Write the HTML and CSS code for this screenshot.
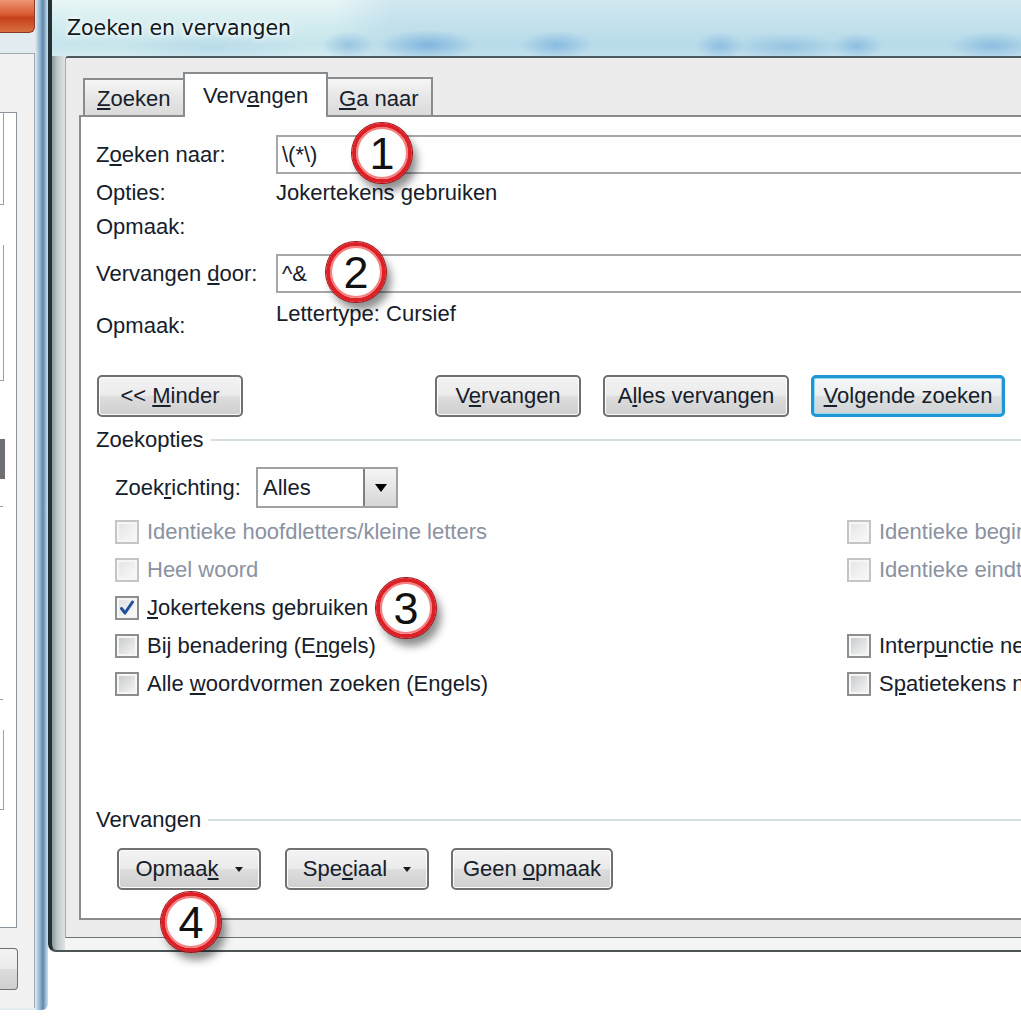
FILE: index.html
```html
<!DOCTYPE html>
<html lang="nl">

<head>
    <meta charset="UTF-8">
    <title>Zoeken en vervangen</title>
    <link rel="stylesheet" href="styles.css">
</head>

<body>
    <div class="desktop">
        <!-- venster op de achtergrond -->
        <div class="back-window">
            <div class="back-close"></div>
            <div class="back-client">
                <div class="back-panel">
                    <div class="back-box back-box-top"></div>
                    <div class="back-box back-box-list"></div>
                    <div class="back-knob"></div>
                    <div class="back-tick"></div>
                    <div class="back-tick"></div>
                    <div class="back-box back-box-low"></div>
                </div>
                <div class="back-button"></div>
            </div>
        </div>

        <!-- dialoogvenster -->
        <div class="dialog">
            <div class="titlebar">Zoeken en vervangen</div>
            <div class="client">
                <div class="tabs">
                    <div class="tab tab-find"><u>Z</u>oeken</div>
                    <div class="tab tab-replace">Verv<u>a</u>ngen</div>
                    <div class="tab tab-goto"><u>G</u>a naar</div>
                </div>
                <div class="panel">
                    <div class="row field">
                        <span class="label">Z<u>o</u>eken naar:</span>
                        <div class="input">\(*\)</div>
                    </div>
                    <div class="row info">
                        <span class="label">Opties:</span>
                        <span>Jokertekens gebruiken</span>
                    </div>
                    <div class="row info short">
                        <span class="label">Opmaak:</span>
                    </div>
                    <div class="row field field-second">
                        <span class="label">Vervangen <u>d</u>oor:</span>
                        <div class="input">^&amp;</div>
                    </div>
                    <div class="row fmt">
                        <span class="label">Opmaak:</span>
                        <span class="value">Lettertype: Cursief</span>
                    </div>

                    <div class="actions">
                        <button class="btn btn-less"><span>&lt;&lt; <u>M</u>inder</span></button>
                        <button class="btn btn-replace"><span>V<u>e</u>rvangen</span></button>
                        <button class="btn btn-all"><span>A<u>l</u>les vervangen</span></button>
                        <button class="btn btn-default"><span><u>V</u>olgende zoeken</span></button>
                    </div>

                    <div class="group group-search">Zoekopties</div>

                    <div class="direction">
                        <span class="dir-label">Zoek<u>r</u>ichting:</span>
                        <div class="select">
                            <span class="select-value">Alles</span>
                            <span class="select-arrow"></span>
                        </div>
                    </div>

                    <div class="options">
                        <div class="opt off"><span class="box"></span><span>Identieke hoofdletters/kleine letters</span></div>
                        <div class="opt off"><span class="box"></span><span>Identieke beginletters</span></div>
                        <div class="opt off"><span class="box"></span><span>Heel woord</span></div>
                        <div class="opt off"><span class="box"></span><span>Identieke eindtekens</span></div>
                        <div class="opt"><span class="box checked"><svg viewBox="0 0 20 20" width="20" height="20"><path d="M4.5 10.5 L8 15 L15.5 4" fill="none" stroke="#21509a" stroke-width="3" stroke-linecap="round" stroke-linejoin="round"/></svg></span><span><u>J</u>okertekens gebruiken</span></div>
                        <div></div>
                        <div class="opt"><span class="box"></span><span>Bij benadering (E<u>n</u>gels)</span></div>
                        <div class="opt"><span class="box"></span><span>Interp<u>u</u>nctie negeren</span></div>
                        <div class="opt"><span class="box"></span><span>Alle <u>w</u>oordvormen zoeken (Engels)</span></div>
                        <div class="opt"><span class="box"></span><span>S<u>p</u>atietekens negeren</span></div>
                    </div>

                    <div class="group group-replace">Vervangen</div>

                    <div class="format-buttons">
                        <button class="btn btn-menu btn-format"><span>Opmaa<u>k</u></span><span class="caret"></span></button>
                        <button class="btn btn-menu btn-special"><span>Spe<u>c</u>iaal</span><span class="caret"></span></button>
                        <button class="btn btn-none"><span>Geen <u>o</u>pmaak</span></button>
                    </div>
                </div>
            </div>
        </div>

        <!-- genummerde markeringen -->
        <div class="badge badge-1">1</div>
        <div class="badge badge-2">2</div>
        <div class="badge badge-3">3</div>
        <div class="badge badge-4">4</div>
    </div>
</body>

</html>
```

FILE: styles.css
```css
* {
    margin: 0;
    padding: 0;
    box-sizing: border-box;
}

body {
    background: #fff;
    font-family: 'Liberation Sans', Arial, sans-serif;
    font-size: 22px;
    color: #16202b;
}

u {
    text-underline-offset: 2px;
}

.desktop {
    position: relative;
    width: 1021px;
    height: 1020px;
    overflow: hidden;
    background: #fff;
}

/* achtergrondvenster */
.back-window {
    position: absolute;
    left: 0;
    top: 0;
    width: 48px;
    height: 1010px;
    background: linear-gradient(90deg, #e2ebf0 0, #e2ebf0 35px, #c0d6e6 37px, #7fa5c5 41px, #5f87aa 43px, #a3c2d9 46px, #cfdfea 48px);
    border-bottom-right-radius: 6px;
}

.back-close {
    width: 35px;
    height: 33px;
    background: linear-gradient(#ec9474, #d95b31 45%, #c63f1b 55%, #d8703f);
    border-right: 1px solid #8a3a24;
    border-bottom: 1px solid #8a3a24;
    border-bottom-right-radius: 6px;
}

.back-client {
    margin-top: 20px;
    width: 35px;
    height: 955px;
    background: #f1f1f1;
    border-top: 1px solid #a0aab2;
    border-right: 1px solid #a0aab2;
    padding-top: 58px;
}

.back-panel {
    width: 17px;
    height: 816px;
    background: #fff;
    border-top: 1px solid #8d959c;
    border-right: 1px solid #8d959c;
    border-bottom: 1px solid #8d959c;
}

.back-box {
    width: 4px;
    border-right: 1px solid #9aa0a6;
    border-bottom: 1px solid #9aa0a6;
}

.back-box-top {
    height: 92px;
}

.back-box-list {
    margin-top: 40px;
    height: 136px;
}

.back-knob {
    margin-top: 58px;
    width: 5px;
    height: 40px;
    background: #6d7174;
}

.back-tick {
    margin-top: 27px;
    width: 3px;
    height: 1px;
    background: #9aa0a6;
}

.back-tick + .back-tick {
    margin-top: 192px;
}

.back-box-low {
    margin-top: 30px;
    height: 80px;
}

.back-button {
    margin-top: 20px;
    width: 18px;
    height: 42px;
    border: 1px solid #707070;
    border-left: none;
    border-radius: 0 4px 4px 0;
    background: linear-gradient(#f2f2f2, #ebebeb 50%, #dcdcdc 50%, #cfcfcf);
}

/* dialoogvenster */
.dialog {
    position: absolute;
    left: 48px;
    top: 0;
    width: 1100px;
    height: 952px;
    display: flex;
    flex-direction: column;
    padding-bottom: 12px;
    border-left: 4px solid #243236;
    border-bottom: 2px solid #4c5456;
    border-bottom-left-radius: 8px;
    background: linear-gradient(90deg, #8f9a9e 0, #c3cacc 6px, #dfe3e4 13px, #f4f6f6 13px);
}

.titlebar {
    height: 56px;
    padding: 14px 0 0 15px;
    font-family: 'DejaVu Sans', sans-serif;
    font-size: 20.5px;
    line-height: 28px;
    color: #101820;
    text-shadow: 0 0 8px #fff, 0 0 4px #fff;
    background:
        radial-gradient(ellipse 26px 14px at 296px 45px, rgba(100, 160, 215, .45), transparent),
        radial-gradient(ellipse 48px 15px at 376px 45px, rgba(85, 150, 212, .55), transparent),
        radial-gradient(ellipse 36px 14px at 505px 45px, rgba(90, 155, 215, .5), transparent),
        radial-gradient(ellipse 24px 14px at 668px 46px, rgba(90, 155, 215, .45), transparent),
        radial-gradient(ellipse 56px 14px at 735px 47px, rgba(100, 160, 215, .4), transparent),
        radial-gradient(ellipse 26px 13px at 805px 46px, rgba(90, 155, 215, .45), transparent),
        radial-gradient(ellipse 44px 14px at 940px 46px, rgba(100, 160, 215, .5), transparent),
        radial-gradient(ellipse 90px 16px at 160px 48px, rgba(150, 195, 225, .3), transparent),
        linear-gradient(90deg, transparent 280px, rgba(140, 190, 225, .25) 340px, rgba(140, 190, 225, .25) 1000px),
        linear-gradient(#e9f6f6, #d5edf0 40%, #c6e5ec 80%, #d2eaf0);
}

.client {
    flex: 1;
    margin-left: 13px;
    padding: 14px 0 17px 13px;
    background: #ececec;
    border-top: 2px solid #4c5a5e;
    border-left: 1px solid #a3abad;
    border-bottom: 1px solid #707070;
    border-top-left-radius: 3px;
}

/* tabbladen */
.tabs {
    display: flex;
    align-items: flex-end;
    height: 43px;
    padding-left: 4px;
}

.tab {
    height: 37px;
    padding: 4px 0 0 12px;
    line-height: 30px;
    border: 2px solid #898c8e;
    border-bottom: none;
    background: linear-gradient(#f6f6f6, #e6e6e6 50%, #dadada);
    white-space: nowrap;
}

.tab-find {
    width: 100px;
    border-right: none;
}

.tab-replace {
    position: relative;
    z-index: 1;
    width: 145px;
    height: 45px;
    margin-bottom: -2px;
    padding: 7px 0 0 18px;
    background: #fff;
}

.tab-goto {
    width: 105px;
    height: 38px;
    border-left: none;
    padding: 5px 0 0 11px;
}

.panel {
    height: 805px;
    padding-left: 15px;
    background: #fff;
    border: 2px solid #898c8e;
    border-right: none;
}

/* velden */
.row {
    display: flex;
    align-items: center;
}

.label {
    flex: none;
    width: 180px;
}

.field {
    height: 39px;
    margin-top: 18px;
}

.field-second {
    margin-top: 12px;
}

.input {
    flex: 1;
    height: 39px;
    padding-left: 4px;
    line-height: 35px;
    background: #fff;
    border: 2px solid #a5a7a9;
    border-right: none;
}

.info {
    height: 38px;
}

.info.short {
    height: 30px;
}

.fmt {
    align-items: flex-start;
    height: 52px;
    line-height: 26px;
}

.fmt .label {
    padding-top: 20px;
}

.fmt .value {
    padding-top: 8px;
}

/* knoppen */
.btn {
    display: inline-flex;
    align-items: center;
    justify-content: center;
    height: 42px;
    font: inherit;
    color: inherit;
    white-space: nowrap;
    border: 2px solid #707070;
    border-radius: 5px;
    background: linear-gradient(#f3f3f3, #ebebeb 48%, #dddddd 52%, #cfcfcf);
    box-shadow: inset 0 0 0 1px #fbfbfb;
}

.actions {
    display: flex;
    gap: 22px;
    margin-top: 30px;
    padding-left: 1px;
}

.btn-less {
    width: 146px;
    margin-right: 170px;
}

.btn-replace {
    width: 146px;
}

.btn-all {
    width: 186px;
}

.btn-default {
    width: 194px;
    border: 3px solid #1e96d6;
    box-shadow: inset 0 0 0 1px #92d8f4;
    background: linear-gradient(#f3f5f6, #eceeef 48%, #dde0e1 52%, #d0d3d4);
}

/* groepskoppen */
.group {
    display: flex;
    align-items: center;
    height: 24px;
}

.group::after {
    content: '';
    flex: 1;
    height: 2px;
    margin-left: 7px;
    background: #d6dee2;
}

.group-search {
    margin-top: 11px;
}

.group-replace {
    margin-top: 105px;
}

/* zoekrichting */
.direction {
    display: flex;
    align-items: center;
    height: 41px;
    margin-top: 15px;
    padding-left: 19px;
}

.dir-label {
    width: 141px;
}

.select {
    display: flex;
    width: 142px;
    height: 41px;
    background: #fff;
    border: 2px solid #9fa2a4;
}

.select-value {
    flex: 1;
    padding-left: 5px;
    line-height: 37px;
}

.select-arrow {
    display: flex;
    align-items: center;
    justify-content: center;
    width: 33px;
    border-left: 2px solid #7e8184;
    background: linear-gradient(#f5f5f5, #e6e6e6 50%, #d6d6d6);
}

.select-arrow::before {
    content: '';
    border-left: 6px solid transparent;
    border-right: 6px solid transparent;
    border-top: 8px solid #000;
}

/* selectievakjes */
.options {
    display: grid;
    grid-template-columns: 732px 1fr;
    grid-auto-rows: 38px;
    margin-top: 5px;
    padding-left: 19px;
}

.opt {
    display: flex;
    align-items: center;
    gap: 8px;
    white-space: nowrap;
}

.opt.off {
    color: #8a92a2;
}

.box {
    flex: none;
    display: flex;
    align-items: center;
    justify-content: center;
    width: 24px;
    height: 24px;
    border: 2px solid #8c8e90;
    background: linear-gradient(135deg, #c4c6c8, #eef0f0 80%);
    box-shadow: inset 0 0 0 2px #f6f6f6;
}

.opt.off .box {
    border-color: #c3c5c7;
    background: linear-gradient(135deg, #e4e4e4, #fafafa);
}

.box.checked {
    background: linear-gradient(135deg, #dcdedf, #f6f7f7 80%);
}

/* opmaakknoppen */
.format-buttons {
    display: flex;
    align-items: center;
    height: 42px;
    margin-top: 16px;
    padding-left: 21px;
}

.btn-format {
    width: 144px;
    margin-right: 24px;
}

.btn-special {
    width: 144px;
    margin-right: 22px;
}

.btn-none {
    width: 162px;
}

.btn-menu {
    gap: 16px;
}

.caret {
    border-left: 4px solid transparent;
    border-right: 4px solid transparent;
    border-top: 5px solid #1a1a1a;
}

/* markeringen */
.badge {
    position: absolute;
    display: flex;
    align-items: center;
    justify-content: center;
    width: 60px;
    height: 60px;
    border-radius: 50%;
    border: 4px solid #dd1f26;
    background: radial-gradient(circle at 50% 45%, #fff 55%, #efefef 100%);
    box-shadow: 0 0 0 1px #9e1218, 5px 8px 9px rgba(0, 0, 0, .45), inset 0 0 0 2px #f58080;
    font-family: 'Liberation Sans', Arial, sans-serif;
    font-size: 45px;
    line-height: 1;
    color: #111;
}

.badge-1 {
    left: 352px;
    top: 123px;
}

.badge-2 {
    left: 326px;
    top: 242px;
}

.badge-3 {
    left: 376px;
    top: 578px;
}

.badge-4 {
    left: 161px;
    top: 892px;
}
```
